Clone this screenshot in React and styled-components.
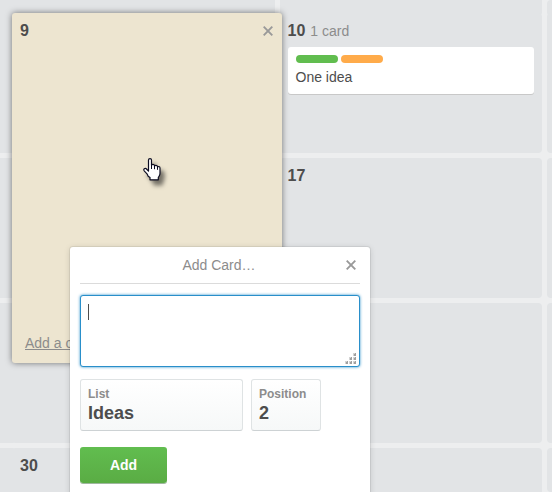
import React from "react";
import styled, { createGlobalStyle } from "styled-components";

const GlobalStyle = createGlobalStyle`
  *, *::before, *::after { box-sizing: border-box; }
  body {
    margin: 0;
    background: #edeeef;
    color: #4d4d4d;
    font: 14px/18px "Liberation Sans", Arial, sans-serif;
  }
  button, textarea { font: inherit; color: inherit; }
`;

const Calendar = styled.main`
  display: grid;
  grid-template-columns: 7px 1fr 1fr 5px;
  grid-template-rows: 8px repeat(3, 140px) minmax(44px, 1fr);
  gap: 5px;
  height: 100vh;
  overflow: hidden;
`;

const RADII = {
  full: "4px",
  top: "0 0 4px 4px",
  left: "0 4px 4px 0",
  right: "4px 0 0 4px",
  bottom: "4px 4px 0 0",
};

const Day = styled.section`
  position: relative;
  min-width: 0;
  padding: 8px;
  background: #e2e4e6;
  border-radius: ${(p) => RADII[p.$edge || "full"]};
`;

const DayHeader = styled.header`
  display: flex;
  align-items: center;
  gap: 5px;
  height: 20px;
`;

const DayNumber = styled.h2`
  margin: 0;
  font-size: 16px;
  line-height: 20px;
  font-weight: bold;
`;

const CardCount = styled.span`
  color: #8c8c8c;
`;

const Card = styled.article`
  margin-top: 6px;
  padding: 8px;
  background: #fff;
  border-radius: 3px;
  box-shadow: 0 1px 0 #c8c8c8;
`;

const Labels = styled.div`
  display: flex;
  gap: 3px;
  margin-bottom: 5px;
`;

const Label = styled.span`
  width: 42px;
  height: 8px;
  border-radius: 4px;
  background: ${(p) => p.$color};
`;

const CardTitle = styled.p`
  margin: 0;
`;

const ExpandedDay = styled.div`
  position: absolute;
  z-index: 1;
  top: 0;
  left: 0;
  right: -7px;
  height: 350px;
  display: flex;
  flex-direction: column;
  justify-content: space-between;
  padding: 8px 8px 11px;
  background: #ede5d0;
  border-radius: 3px;
  box-shadow: 0 0 6px rgba(0, 0, 0, 0.5);
`;

const CloseButton = styled.button`
  display: flex;
  margin-left: auto;
  padding: 0;
  border: 0;
  background: none;
  color: #999;
  cursor: pointer;
`;

const AddCardLink = styled.a`
  align-self: flex-start;
  margin-left: 5px;
  color: #8c8c8c;
  text-decoration: underline;
`;

const Popover = styled.form`
  position: absolute;
  z-index: 2;
  top: 234px;
  left: 58px;
  width: 300px;
  padding: 0 10px 16px;
  background: #fff;
  border-radius: 3px;
  box-shadow: 0 0 0 1px rgba(0, 0, 0, 0.06), 0 1px 6px rgba(0, 0, 0, 0.15);
`;

const PopoverHeader = styled.header`
  display: grid;
  grid-template-columns: 16px 1fr 16px;
  align-items: center;
  height: 37px;
  margin-bottom: 11px;
  padding: 0 3px 0 1px;
  border-bottom: 1px solid #dbdbdb;
`;

const PopoverTitle = styled.h3`
  margin: 0;
  font-size: 14px;
  font-weight: normal;
  text-align: center;
  color: #8c8c8c;
`;

const TextField = styled.div`
  position: relative;
  display: flex;
`;

const TextArea = styled.textarea`
  width: 100%;
  height: 72px;
  padding: 8px 7px;
  border: 1px solid #298fca;
  border-radius: 3px;
  background: #fff;
  box-shadow: 0 0 3px #298fca;
  outline: none;
  resize: none;
  caret-color: transparent;
`;

const Caret = styled.span`
  position: absolute;
  top: 9px;
  left: 8px;
  width: 1px;
  height: 16px;
  background: #4d4d4d;
`;

const Grip = styled.svg`
  position: absolute;
  right: 4px;
  bottom: 3px;
  pointer-events: none;
`;

const Options = styled.div`
  display: flex;
  gap: 8px;
  margin: 12px 0 16px;
`;

const OptionButton = styled.button`
  flex: 0 0 ${(p) => p.$width};
  display: flex;
  flex-direction: column;
  height: 52px;
  padding: 7px;
  text-align: left;
  font-weight: bold;
  border: 1px solid #dfe3e4;
  border-bottom-color: #cdd2d4;
  border-radius: 3px;
  background: linear-gradient(#fff, #f6f8f8);
  cursor: pointer;
`;

const OptionName = styled.span`
  font-size: 12px;
  line-height: 14px;
  color: #8c8c8c;
`;

const OptionValue = styled.span`
  font-size: 18px;
  line-height: 24px;
`;

const SubmitButton = styled.button`
  width: 87px;
  height: 36px;
  padding: 0;
  border: 0;
  border-radius: 3px;
  font-weight: bold;
  color: #fff;
  background: linear-gradient(#61bd4f, #5aac44);
  box-shadow: 0 1px 0 #3f6f3f80;
  cursor: pointer;
`;

const Pointer = styled.svg`
  position: absolute;
  top: 145px;
  left: 131px;
  overflow: visible;
  pointer-events: none;
  filter: drop-shadow(4px 5px 2px rgba(0, 0, 0, 0.5));
`;

function CloseIcon() {
  return (
    <svg width="12" height="12" viewBox="0 0 12 12" aria-hidden="true">
      <path d="M1.7 1.7 10.3 10.3M10.3 1.7 1.7 10.3" stroke="currentColor" strokeWidth="1.9" />
    </svg>
  );
}

const GRIP_DOTS = [[8, 0], [4, 4], [8, 4], [0, 8], [4, 8], [8, 8]];

function ResizeGrip() {
  return (
    <Grip width="11" height="11" viewBox="0 0 11 11" aria-hidden="true">
      {GRIP_DOTS.map(([x, y]) => (
        <g key={`${x}-${y}`}>
          <rect x={x} y={y} width="3" height="3" fill="#d4d4d4" />
          <path d={`M${x + 1} ${y + 3}v-2h1v-1h1v3z`} fill="#a0a0a0" />
        </g>
      ))}
    </Grip>
  );
}

function HandPointer() {
  return (
    <Pointer width="18" height="23" viewBox="0 0 18 23" aria-hidden="true">
      <path
        d="M5.5 13V2Q5.5.6 7 .6T8.5 2v5.3q.2-1 1.5-1t1.5 1.2v.7q.2-.9 1.5-.9t1.5 1.2v.8q.2-.8 1.2-.8 1.3 0 1.3 1.4v5.3q0 1.7-.8 2.8l-.9 1.5v2.3H7v-2.2L5.2 18.3 4 15.8 1.4 13.1Q.2 11.7 1.3 10.8q1.2-.9 2.7.7z"
        fill="#fff"
        stroke="#0c0c20"
        strokeWidth="1.2"
        strokeLinejoin="round"
      />
      <path d="M8.5 7v4M11.5 8v3.2M14.5 9v2.8" stroke="#0c0c20" fill="none" />
    </Pointer>
  );
}

function AddCardPopover() {
  return (
    <Popover onSubmit={(event) => event.preventDefault()}>
      <PopoverHeader>
        <span />
        <PopoverTitle>Add Card…</PopoverTitle>
        <CloseButton type="button" aria-label="Close">
          <CloseIcon />
        </CloseButton>
      </PopoverHeader>
      <TextField>
        <TextArea aria-label="Card title" />
        <Caret />
        <ResizeGrip />
      </TextField>
      <Options>
        <OptionButton type="button" $width="163px">
          <OptionName>List</OptionName>
          <OptionValue>Ideas</OptionValue>
        </OptionButton>
        <OptionButton type="button" $width="70px">
          <OptionName>Position</OptionName>
          <OptionValue>2</OptionValue>
        </OptionButton>
      </Options>
      <SubmitButton type="submit">Add</SubmitButton>
    </Popover>
  );
}

export default function App() {
  return (
    <>
      <GlobalStyle />
      <Calendar>
        <Day $edge="left" />
        <Day $edge="top" />
        <Day $edge="top" />
        <Day $edge="right" />

        <Day $edge="left" />
        <Day>
          <ExpandedDay>
            <DayHeader>
              <DayNumber>9</DayNumber>
              <CloseButton type="button" aria-label="Close day">
                <CloseIcon />
              </CloseButton>
            </DayHeader>
            <AddCardLink href="#add">Add a card…</AddCardLink>
            <HandPointer />
          </ExpandedDay>
          <AddCardPopover />
        </Day>
        <Day>
          <DayHeader>
            <DayNumber>10</DayNumber>
            <CardCount>1 card</CardCount>
          </DayHeader>
          <Card>
            <Labels>
              <Label $color="#61bd4f" />
              <Label $color="#ffab4a" />
            </Labels>
            <CardTitle>One idea</CardTitle>
          </Card>
        </Day>
        <Day $edge="right" />

        <Day $edge="left" />
        <Day />
        <Day>
          <DayHeader>
            <DayNumber>17</DayNumber>
          </DayHeader>
        </Day>
        <Day $edge="right" />

        <Day $edge="left" />
        <Day />
        <Day />
        <Day $edge="right" />

        <Day $edge="left" />
        <Day $edge="bottom">
          <DayHeader>
            <DayNumber>30</DayNumber>
          </DayHeader>
        </Day>
        <Day $edge="bottom" />
        <Day $edge="right" />
      </Calendar>
    </>
  );
}
